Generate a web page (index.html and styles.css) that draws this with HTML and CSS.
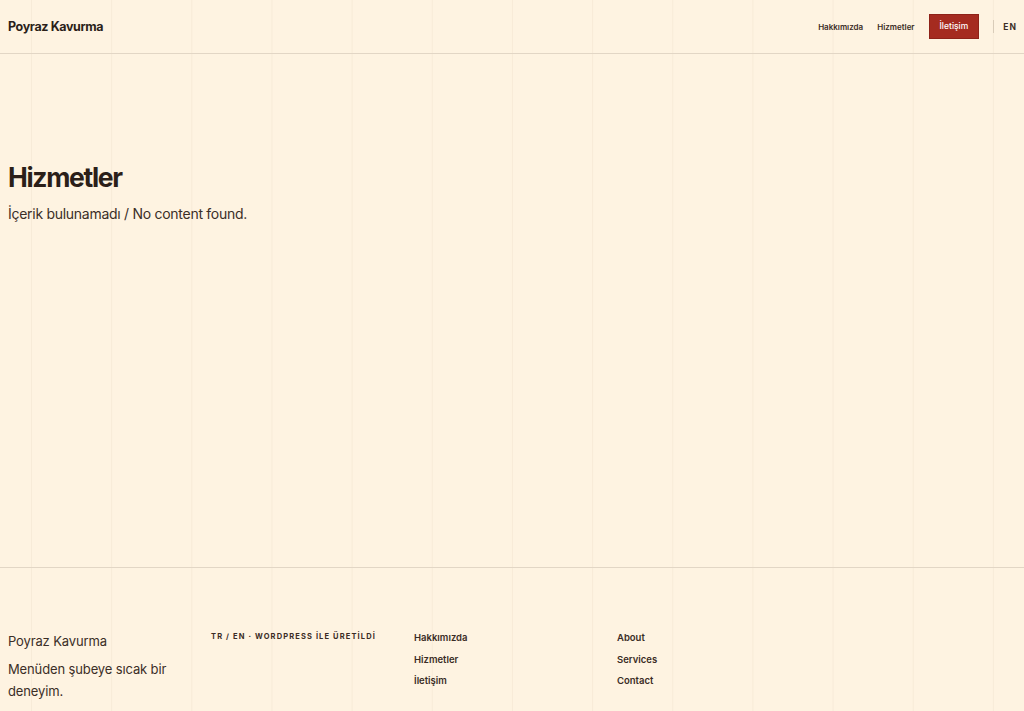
FILE: index.html
```html
<!DOCTYPE html>
<html lang="tr">
<head>
    <meta charset="UTF-8">
    <meta name="viewport" content="width=device-width, initial-scale=1.0">
    <title>Hizmetler - Poyraz Kavurma</title>
    <link rel="stylesheet" href="styles.css">
</head>
<body>
    <header class="site-header">
        <a class="logo" href="#">Poyraz Kavurma</a>
        <nav class="main-nav">
            <a href="#">Hakkımızda</a>
            <a href="#">Hizmetler</a>
            <a class="nav-cta" href="#">İletişim</a>
            <span class="nav-sep"></span>
            <a class="lang" href="#">EN</a>
        </nav>
    </header>

    <main class="page">
        <h1>Hizmetler</h1>
        <p>İçerik bulunamadı / No content found.</p>
    </main>

    <footer class="site-footer">
        <div class="footer-col">
            <p class="footer-brand">Poyraz Kavurma</p>
            <p class="footer-tagline">Menüden şubeye sıcak bir deneyim.</p>
        </div>
        <div class="footer-col">
            <p class="footer-meta">TR / EN · WordPress ile üretildi</p>
        </div>
        <ul class="footer-links">
            <li><a href="#">Hakkımızda</a></li>
            <li><a href="#">Hizmetler</a></li>
            <li><a href="#">İletişim</a></li>
        </ul>
        <ul class="footer-links">
            <li><a href="#">About</a></li>
            <li><a href="#">Services</a></li>
            <li><a href="#">Contact</a></li>
        </ul>
    </footer>
</body>
</html>
```

FILE: styles.css
```css
body {
    font-family: Inter, "Noto Sans", sans-serif;
    margin: 0;
    padding: 0;
    color: #2b1f19;
    background-color: #fef3e1;
    background-image: linear-gradient(to right, rgba(120, 80, 40, 0.05) 0, rgba(120, 80, 40, 0.05) 1px, transparent 1px);
    background-size: calc((100% - 62px) / 12) 100%;
    background-position: 31px 0;
}
a {
    color: inherit;
    text-decoration: none;
}
.site-header {
    display: flex;
    justify-content: space-between;
    align-items: center;
    height: 53px;
    padding: 0 8px;
    border-bottom: 1px solid #e2d6c5;
}
.logo {
    font-size: 12.5px;
    font-weight: 700;
    letter-spacing: -0.03em;
    color: #2b1f19;
}
.main-nav {
    display: flex;
    align-items: center;
    font-size: 8px;
    font-weight: 600;
    color: #3a2c25;
}
.main-nav a {
    margin-left: 14px;
}
.main-nav a:first-child {
    margin-left: 0;
}
.nav-cta {
    background: #a52b20;
    color: #fff;
    padding: 6px 10px 7px;
    font-weight: 500;
    font-size: 8.5px;
    border: 1px solid #8e2218;
}
.nav-sep {
    width: 1px;
    height: 13px;
    background: #d9ccb9;
    margin-left: 14px;
}
.main-nav .lang {
    margin-left: 9px;
    letter-spacing: 0.12em;
    font-size: 8.5px;
    font-weight: 700;
    margin-right: -1px;
}
.page {
    min-height: 513px;
    padding: 108px 8px 0;
    box-sizing: border-box;
}
.page h1 {
    margin: 0;
    font-size: 26.5px;
    font-weight: 700;
    letter-spacing: -0.05em;
    line-height: 1.2;
    color: #2b1f19;
}
.page p {
    margin: 11px 0 0;
    font-size: 14px;
    letter-spacing: -0.02em;
    color: #3b2e27;
}
.site-footer {
    display: grid;
    grid-template-columns: repeat(4, 179px);
    gap: 24px;
    padding: 62px 8px 20px;
    border-top: 1px solid #e2d6c5;
}
.footer-col p {
    margin: 0;
}
.footer-brand {
    font-size: 13px;
    color: #3b2e27;
    letter-spacing: -0.01em;
    line-height: 22px;
}
.footer-tagline {
    margin-top: 6px !important;
    font-size: 13px;
    line-height: 22px;
    color: #3b2e27;
    letter-spacing: -0.01em;
}
.footer-meta {
    font-size: 7.5px;
    font-weight: 700;
    letter-spacing: 0.15em;
    text-transform: uppercase;
    color: #3a2c25;
    padding-top: 2px;
}
.footer-links {
    list-style: none;
    margin: -3px 0 0;
    padding: 0;
    font-size: 9.5px;
    font-weight: 600;
    color: #3a2c25;
}
.footer-links li {
    line-height: 21.5px;
}
```
